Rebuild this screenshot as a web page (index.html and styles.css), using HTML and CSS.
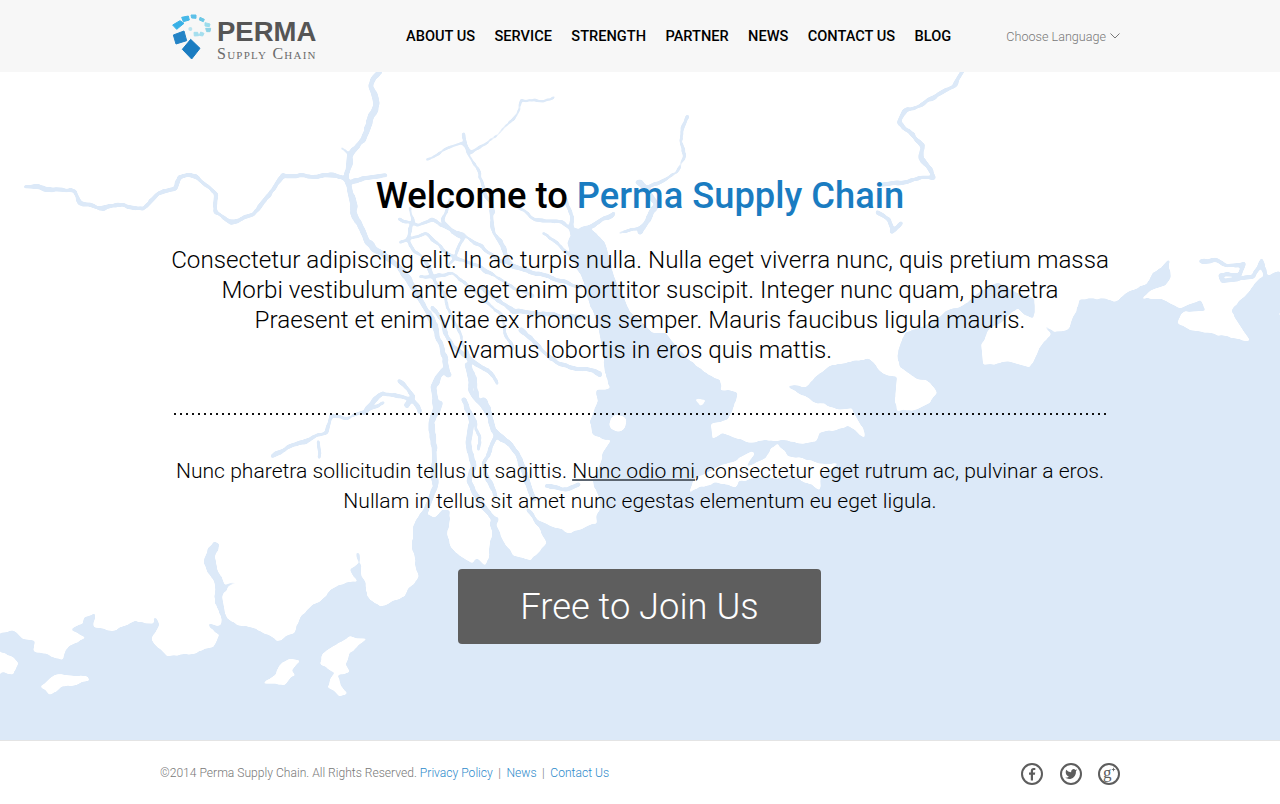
FILE: index.html
```html
<!DOCTYPE html>
<html lang="en">
<head>
    <meta charset="UTF-8">
    <meta name="viewport" content="width=device-width, initial-scale=1.0">
    <title>Perma Supply Chain</title>
    <link rel="stylesheet" href="styles.css">
</head>
<body>
    <header class="site-header">
        <div class="header-inner">
            <a class="logo" href="#">
                <svg class="logo-mark" viewBox="36 36 135 144" aria-hidden="true">
                    <polygon fill="#1a7cc1" stroke="#1a7cc1" points="92,118 120,145 95,177 67,148"/>
                    <polygon fill="#2383c6" stroke="#2383c6" points="40,105 72,93 80,122 48,132"/>
                    <polygon fill="#38b0e6" stroke="#38b0e6" points="38,75 60,62 72,70 50,88"/>
                    <polygon fill="#45b8e8" stroke="#45b8e8" points="65,52 85,48 88,60 70,65"/>
                    <polygon fill="#5cc0e8" stroke="#5cc0e8" points="93,45 108,45 108,55 95,54"/>
                    <polygon fill="#6cc8e6" stroke="#6cc8e6" points="120,52 133,58 130,65 118,60"/>
                    <polygon fill="#9adcec" stroke="#9adcec" points="135,68 150,72 148,80 135,78"/>
                    <polygon fill="#8cd2e6" stroke="#8cd2e6" points="137,85 152,85 150,95 140,95"/>
                    <polygon fill="#a4deee" stroke="#a4deee" points="122,96 132,100 128,108 118,106"/>
                    <polygon fill="#a4deee" stroke="#a4deee" points="102,97 113,97 116,107 103,108"/>
                    <circle fill="#b8e4f0" cx="91" cy="87" r="6"/>
                </svg>
                <span class="logo-text">
                    <span class="logo-name">PERMA</span>
                    <span class="logo-sub">Supply Chain</span>
                </span>
            </a>
            <nav class="main-nav">
                <a href="#">About us</a>
                <a href="#">Service</a>
                <a href="#">Strength</a>
                <a href="#">Partner</a>
                <a href="#">News</a>
                <a href="#">Contact us</a>
                <a href="#">Blog</a>
            </nav>
            <a class="lang" href="#">Choose Language
                <svg class="chevron" viewBox="0 0 10 6" aria-hidden="true"><polyline points="0.5,0.5 5,5 9.5,0.5"/></svg>
            </a>
        </div>
    </header>

    <main class="hero">
        <svg class="map" viewBox="0 0 1280 668" aria-hidden="true">
            <!-- black and white here, the filter roughens the edges and recolours -->
            <filter id="coast" filterUnits="userSpaceOnUse" x="-20" y="-20" width="1320" height="708" color-interpolation-filters="sRGB">
                <feTurbulence type="fractalNoise" baseFrequency=".05" numOctaves="2" seed="4" result="noise"/>
                <feDisplacementMap in="SourceGraphic" in2="noise" scale="7" xChannelSelector="R" yChannelSelector="G"/>
                <feGaussianBlur stdDeviation="1"/>
                <feComponentTransfer>
                    <feFuncR type="linear" slope="5" intercept="-2.6"/>
                    <feFuncG type="linear" slope="5" intercept="-2.6"/>
                    <feFuncB type="linear" slope="5" intercept="-2.6"/>
                </feComponentTransfer>
                <feComponentTransfer>
                    <feFuncR type="linear" slope=".137" intercept=".863"/>
                    <feFuncG type="linear" slope=".086" intercept=".914"/>
                    <feFuncB type="linear" slope=".027" intercept=".973"/>
                </feComponentTransfer>
            </filter>
            <g filter="url(#coast)">
            <g transform="translate(0,-72)">
                <rect class="land" x="-20" y="50" width="1320" height="720"/>

                <!-- sea, traced from the coast -->
                <g class="water" transform="translate(0,400) scale(.408,.3333)">
                    <polygon points="0,700 35,695 50,715 90,720 85,755 120,775 150,778 170,740 215,715 175,690 205,675 210,650 235,640 232,680 280,690 330,670 372,672 375,648 387,670 370,720 410,770 470,760 525,745 540,705 510,670 538,682 540,650 525,560 505,490 510,440 525,422 540,430 525,470 530,500 545,560 600,540 560,560 545,580 555,660 600,680 650,700 680,722 725,700 740,650 790,590 820,560 875,545 860,510 880,490 870,460 850,460 880,462 885,530 905,590 935,625 990,590 1000,570 1030,530 1030,1020 0,1020"/>
                </g>
                <g class="water" transform="translate(400,400) scale(.3333)">
                    <polygon points="60,545 40,440 40,380 65,335 100,355 130,330 290,350 390,320 440,340 590,350 600,330 585,240 610,165 640,120 575,105 570,70 590,10 590,-30 720,-30 720,1020 60,1020"/>
                </g>
                <g class="water" transform="translate(400,200) scale(.3333)">
                    <polygon points="530,90 560,80 610,130 640,215 680,320 760,400 800,400 860,480 960,540 960,660 610,660 630,590 620,500 600,400 570,300 535,210 505,130"/>
                </g>
                <g class="water" transform="translate(700,220) scale(.3333)">
                    <polygon points="1000,240 950,220 900,190 850,210 780,260 700,300 620,345 595,385 600,440 640,465 690,490 715,520 690,550 650,570 590,575 585,520 590,475 540,455 510,420 430,425 390,440 320,500 220,490 170,515 120,520 50,510 20,500 0,480 0,660 1000,660"/>
                </g>
                <g class="water" transform="translate(640,72) scale(.408,.3333)">
                    <polygon points="1568,598 1530,610 1490,660 1450,720 1495,805 1420,790 1350,775 1315,750 1330,720 1385,715 1370,685 1325,710 1280,685 1228,685 1245,660 1280,640 1300,620 1297,568 1280,590 1250,605 1240,640 1200,660 1170,685 1130,680 1075,680 1070,720 1055,770 1010,785 985,745 925,710 900,800 900,1020 1568,1020"/>
                </g>
                <rect class="water" x="640" y="411" width="660" height="360"/>
                <rect class="water" x="-20" y="730" width="1320" height="40"/>
                <rect class="water" x="-20" y="686" width="21" height="84"/>
                <rect class="water" x="1279" y="316" width="21" height="120"/>

                <!-- islands and land on top of the sea -->
                <g class="land" transform="translate(0,400) scale(.408,.3333)">
                    <polygon points="0,755 30,765 50,790 30,825 0,820"/>
                    <polygon points="100,860 125,830 155,820 215,828 222,845 170,858 120,880"/>
                    <polygon points="640,855 675,825 680,795 705,772 735,778 715,810 725,830 700,855"/>
                    <polygon points="780,790 790,760 835,725 860,710 905,712 880,735 855,760 848,790 860,815 825,830 855,880 830,895 815,875 798,860 820,820 800,795"/>
                </g>
                <g class="land" transform="translate(400,400) scale(.3333)">
                    <polygon points="150,325 140,400 155,450 215,488 225,478 262,503 270,460 278,400 275,325"/>
                    <polygon points="305,320 290,380 315,430 335,470 390,485 445,430 400,350 370,320"/>
                    <polygon points="380,320 420,360 455,375 510,405 565,375 595,365 590,320 575,255 540,262 450,255 440,300"/>
                    <ellipse cx="655" cy="70" rx="24" ry="26"/>
                </g>
                <g class="land" transform="translate(640,72) scale(.408,.3333)">
                    <polygon points="925,710 985,745 1005,790 970,850 955,890 900,872 840,880 835,810 860,770 890,740"/>
                </g>
                <g class="land" transform="translate(640,400) scale(.408,.3333)">
                    <polygon points="175,122 170,78 215,52 232,15 240,-30 300,-45 345,-60 400,-10 430,5 470,20 490,25 515,20 545,80 550,112 510,82 440,100 430,130 340,120 270,130 200,100"/>
                    <polygon points="340,122 360,170 430,185 490,190 440,230 442,275 405,240 370,225 340,240 300,230 240,245 235,265 190,245 118,278 130,240 200,195 275,152 282,160 260,195 310,170"/>
                    <polygon points="130,-5 160,-5 150,20"/>
                </g>

                <!-- rivers -->
                <g class="river" transform="translate(0,72) scale(.408,.3333)">
                    <polyline class="r4" points="930,0 912,40 925,100 905,160 890,210 855,250 850,310 870,420 900,510 990,600 1050,720 1090,850 1100,905"/>
                    <polyline class="r3" points="65,345 110,350 180,355 195,390 245,410 290,395 350,410 385,365 430,350 440,315 480,315 530,370 525,420 570,450 620,430 660,370 690,310 740,310 840,315 860,325 945,310"/>
                    <polyline class="r1" points="1045,260 1110,225 1135,215 1160,240 1220,190 1270,120 1280,80 1330,85 1360,72"/>
                    <polyline class="r2" points="1135,185 1150,240 1175,300 1190,370 1210,420"/>
                    <polyline class="r1" points="855,250 840,225"/>
                    <polyline class="r3" points="890,1020 940,960 1010,985 1030,1020"/>
                </g>
                <g class="river" transform="translate(400,200) scale(.3333)">
                    <polyline class="r2" points="0,60 50,75 100,60 180,100 235,135 300,180 380,210"/>
                    <polyline class="r2" points="30,20 40,60 20,120 70,180 130,280 180,400 215,500 240,610"/>
                    <polyline class="r2" points="150,0 130,60 190,120 150,190"/>
                    <polyline class="r3" points="270,20 280,100 340,200 450,230 540,260"/>
                    <polyline class="r2" points="350,10 400,60 470,60 530,90"/>
                    <polyline class="r2" points="660,100 720,80 750,60"/>
                    <polyline class="r3" points="240,260 340,330 470,350 560,350"/>
                    <polyline class="r3" points="100,320 160,440 260,510 290,550"/>
                    <polyline class="r3" points="360,390 470,490 600,520"/>
                    <polyline class="r4" points="130,510 100,560 110,620"/>
                    <polyline class="r3" points="200,490 220,580 260,640"/>
                    <polyline class="r3" points="0,540 40,590 20,620"/>
                    <polyline class="r3" points="520,100 500,0"/>
                    <polyline class="r3" points="560,90 640,40"/>
                    <polyline class="r2" points="0,130 80,100 140,160 220,190 300,240 400,290"/>
                    <polyline class="r2" points="60,230 160,220 240,290 300,340 340,450"/>
                    <polyline class="r2" points="430,100 520,170"/>
                </g>
                <g class="river" transform="translate(400,400) scale(.3333)">
                    <polyline class="r4" points="120,10 100,70 100,130 105,260 75,335"/>
                    <polyline class="r4" points="195,0 215,60 205,130 215,200 205,240 230,300 290,360"/>
                    <polyline class="r4" points="250,0 280,90 320,130 350,160 375,220 400,300"/>
                    <polyline class="r2" points="225,60 240,130 235,150"/>
                    <polyline class="r3" points="290,110 250,190 290,290"/>
                    <polyline class="r3" points="440,255 500,270 540,255"/>
                </g>
                <g class="river" transform="translate(0,400) scale(.408,.3333)">
                    <polyline class="r3" points="810,50 800,100 730,130 670,165"/>
                    <polyline class="r2" points="780,130 785,170"/>
                    <polyline class="r2" points="810,50 850,55 940,10"/>
                </g>
                <g class="river" transform="translate(640,72) scale(.408,.3333)">
                    <polyline class="r2" points="115,130 95,210 110,250 90,300 50,330 0,360"/>
                    <polyline class="r3" points="790,0 770,40 720,75 690,95 650,110 635,150 690,220 690,260 720,320 690,320 640,330 580,340"/>
                    <polyline class="r3" points="580,420 610,440 620,480 640,450"/>
                    <polyline class="r4" points="0,330 40,400 0,480"/>
                    <polyline class="r3" points="1375,565 1410,560 1440,580 1480,575 1470,610 1420,610 1425,630 1500,620 1525,565 1530,610"/>
                </g>
            </g>
            </g>
        </svg>

        <div class="hero-content">
            <h1>Welcome to <span class="brand">Perma Supply Chain</span></h1>
            <p class="lead">Consectetur adipiscing elit. In ac turpis nulla. Nulla eget viverra nunc, quis pretium massa<br>
            Morbi vestibulum ante eget enim porttitor suscipit. Integer nunc quam, pharetra<br>
            Praesent et enim vitae ex rhoncus semper. Mauris faucibus ligula mauris.<br>
            Vivamus lobortis in eros quis mattis.</p>
            <div class="dots"></div>
            <p class="sub">Nunc pharetra sollicitudin tellus ut sagittis. <a href="#">Nunc odio mi</a>, consectetur eget rutrum ac, pulvinar a eros.<br>
            Nullam in tellus sit amet nunc egestas elementum eu eget ligula.</p>
            <a class="join-btn" href="#">Free to Join Us</a>
        </div>
    </main>

    <footer class="site-footer">
        <div class="footer-inner">
            <p class="copy">©2014 Perma Supply Chain. All Rights Reserved. <a href="#">Privacy Policy</a><span class="sep">|</span><a href="#">News</a><span class="sep">|</span><a href="#">Contact Us</a></p>
            <div class="social">
                <a href="#" aria-label="Facebook">
                    <svg viewBox="0 0 22 22"><circle class="ring" cx="11" cy="11" r="10"/><path class="glyph" d="M12 17.500v-5.800h1.900l.3-2.200h-2.200V8.200c0-.7.2-1.100 1.100-1.100h1.200V5.100c-.2 0-.9-.1-1.700-.1-1.700 0-2.800 1-2.800 2.900v1.600H8v2.200h1.800v5.800z"/></svg>
                </a>
                <a href="#" aria-label="Twitter">
                    <svg viewBox="0 0 22 22"><circle class="ring" cx="11" cy="11" r="10"/><path class="glyph" transform="translate(4.600,4.600) scale(.54)" d="M23 3a10.900 10.900 0 0 1-3 1.400 4.500 4.500 0 0 0-7.900 3v1A10.700 10.700 0 0 1 3 4s-4 9 5 13a11.600 11.600 0 0 1-7 2c9 5 20 0 20-11.500a4.500 4.500 0 0 0-.1-.8A7.700 7.700 0 0 0 23 3z"/></svg>
                </a>
                <a href="#" aria-label="Google Plus">
                    <svg viewBox="0 0 22 22"><circle class="ring" cx="11" cy="11" r="10"/><text class="gplus" x="5" y="15">g</text><path class="plus" d="M15.500 4.800v3.400M13.800 6.500h3.400"/></svg>
                </a>
            </div>
        </div>
    </footer>
</body>
</html>
```

FILE: styles.css
```css
* {
    box-sizing: border-box;
}

body {
    margin: 0;
    background-color: #ffffff;
    font-family: 'Roboto', sans-serif;
    color: #000000;
}

a {
    text-decoration: none;
    color: inherit;
}

/* Header */
.site-header {
    height: 72px;
    background-color: #f7f7f7;
}

.header-inner {
    display: flex;
    align-items: center;
    width: 960px;
    height: 100%;
    margin: 0 auto;
    padding-left: 12px;
}

.logo {
    display: flex;
    align-items: center;
    width: 234px;
    height: 100%;
}

.logo-mark {
    width: 45px;
    height: 48px;
    flex: none;
    stroke-width: 3;
    stroke-linejoin: round;
}

.logo-text {
    display: flex;
    flex-direction: column;
    margin-top: 9px;
}

.logo-name {
    font-family: 'Liberation Sans', sans-serif;
    font-size: 27.500px;
    font-weight: bold;
    line-height: 26px;
    color: #555555;
}

.logo-sub {
    font-family: 'Liberation Serif', serif;
    font-size: 16px;
    font-variant: small-caps;
    letter-spacing: 1.250px;
    line-height: 17px;
    color: #6b6b6b;
}

.main-nav {
    display: flex;
    gap: 19.400px;
}

.main-nav a {
    font-size: 14.600px;
    font-weight: 500;
    text-transform: uppercase;
    color: #000000;
}

.lang {
    display: flex;
    align-items: center;
    gap: 4px;
    margin-left: auto;
    font-size: 12.600px;
    font-weight: 300;
    color: #777777;
}

.chevron {
    width: 10px;
    height: 6px;
    fill: none;
    stroke: #777777;
    stroke-width: 1;
}

/* Hero with the map behind it */
.hero {
    position: relative;
    height: 668px;
    overflow: hidden;
}

.map {
    position: absolute;
    top: 0;
    left: 0;
    width: 1280px;
    height: 668px;
}

.water {
    fill: #000000;
}

.land {
    fill: #ffffff;
}

.river polyline {
    fill: none;
    stroke: #000000;
    stroke-linejoin: round;
    stroke-linecap: round;
    vector-effect: non-scaling-stroke;
}

.r1 {
    stroke-width: 1.800px;
}

.r2 {
    stroke-width: 2.500px;
}

.r3 {
    stroke-width: 3.500px;
}

.r4 {
    stroke-width: 5px;
}

.hero-content {
    position: relative;
    display: flex;
    flex-direction: column;
    align-items: center;
    width: 936px;
    margin: 0 auto;
    padding-top: 102px;
    text-align: center;
}

h1 {
    margin: 0;
    font-size: 36.300px;
    font-weight: 500;
    line-height: 44px;
}

.brand {
    color: #1a7cc1;
}

.lead {
    margin: 27px 0 0;
    font-size: 24.200px;
    font-weight: 300;
    line-height: 30px;
    white-space: nowrap;
}

.dots {
    width: 100%;
    height: 2px;
    margin-top: 48px;
    background-image: linear-gradient(90deg, #111111 2px, transparent 2px);
    background-position: 2px 0;
    background-size: 6px 2px;
}

.sub {
    margin: 41px 0 0;
    font-size: 21.100px;
    font-weight: 300;
    line-height: 30px;
    white-space: nowrap;
}

.sub a {
    text-decoration: underline;
    text-decoration-color: #5c6570;
    text-decoration-thickness: 2px;
    text-underline-offset: 1px;
}

.join-btn {
    display: flex;
    align-items: center;
    justify-content: center;
    width: 363px;
    height: 75px;
    margin: 53px 1px 0 0;
    background-color: #5e5e5e;
    border-radius: 4px;
    font-size: 36.300px;
    font-weight: 300;
    color: #ffffff;
}

/* Footer */
.site-footer {
    height: 64px;
    border-top: 1px solid #e4e4e4;
    background-color: #ffffff;
}

.footer-inner {
    display: flex;
    align-items: center;
    justify-content: space-between;
    width: 960px;
    height: 100%;
    margin: 0 auto;
}

.copy {
    margin: 0;
    font-size: 12.100px;
    font-weight: 300;
    color: #777777;
}

.copy a {
    color: #2d8acb;
}

.sep {
    margin: 0 5.500px;
}

.social {
    display: flex;
    gap: 16.500px;
    margin-top: 2px;
}

.social a {
    display: block;
    width: 22px;
    height: 22px;
}

.social svg {
    display: block;
    width: 22px;
    height: 22px;
}

.ring {
    fill: none;
    stroke: #5d5d5d;
    stroke-width: 2;
}

.glyph {
    fill: #5d5d5d;
}

.gplus {
    font-family: 'Liberation Serif', serif;
    font-size: 17px;
    fill: #5d5d5d;
}

.plus {
    fill: none;
    stroke: #5d5d5d;
    stroke-width: 0.8;
}
```
